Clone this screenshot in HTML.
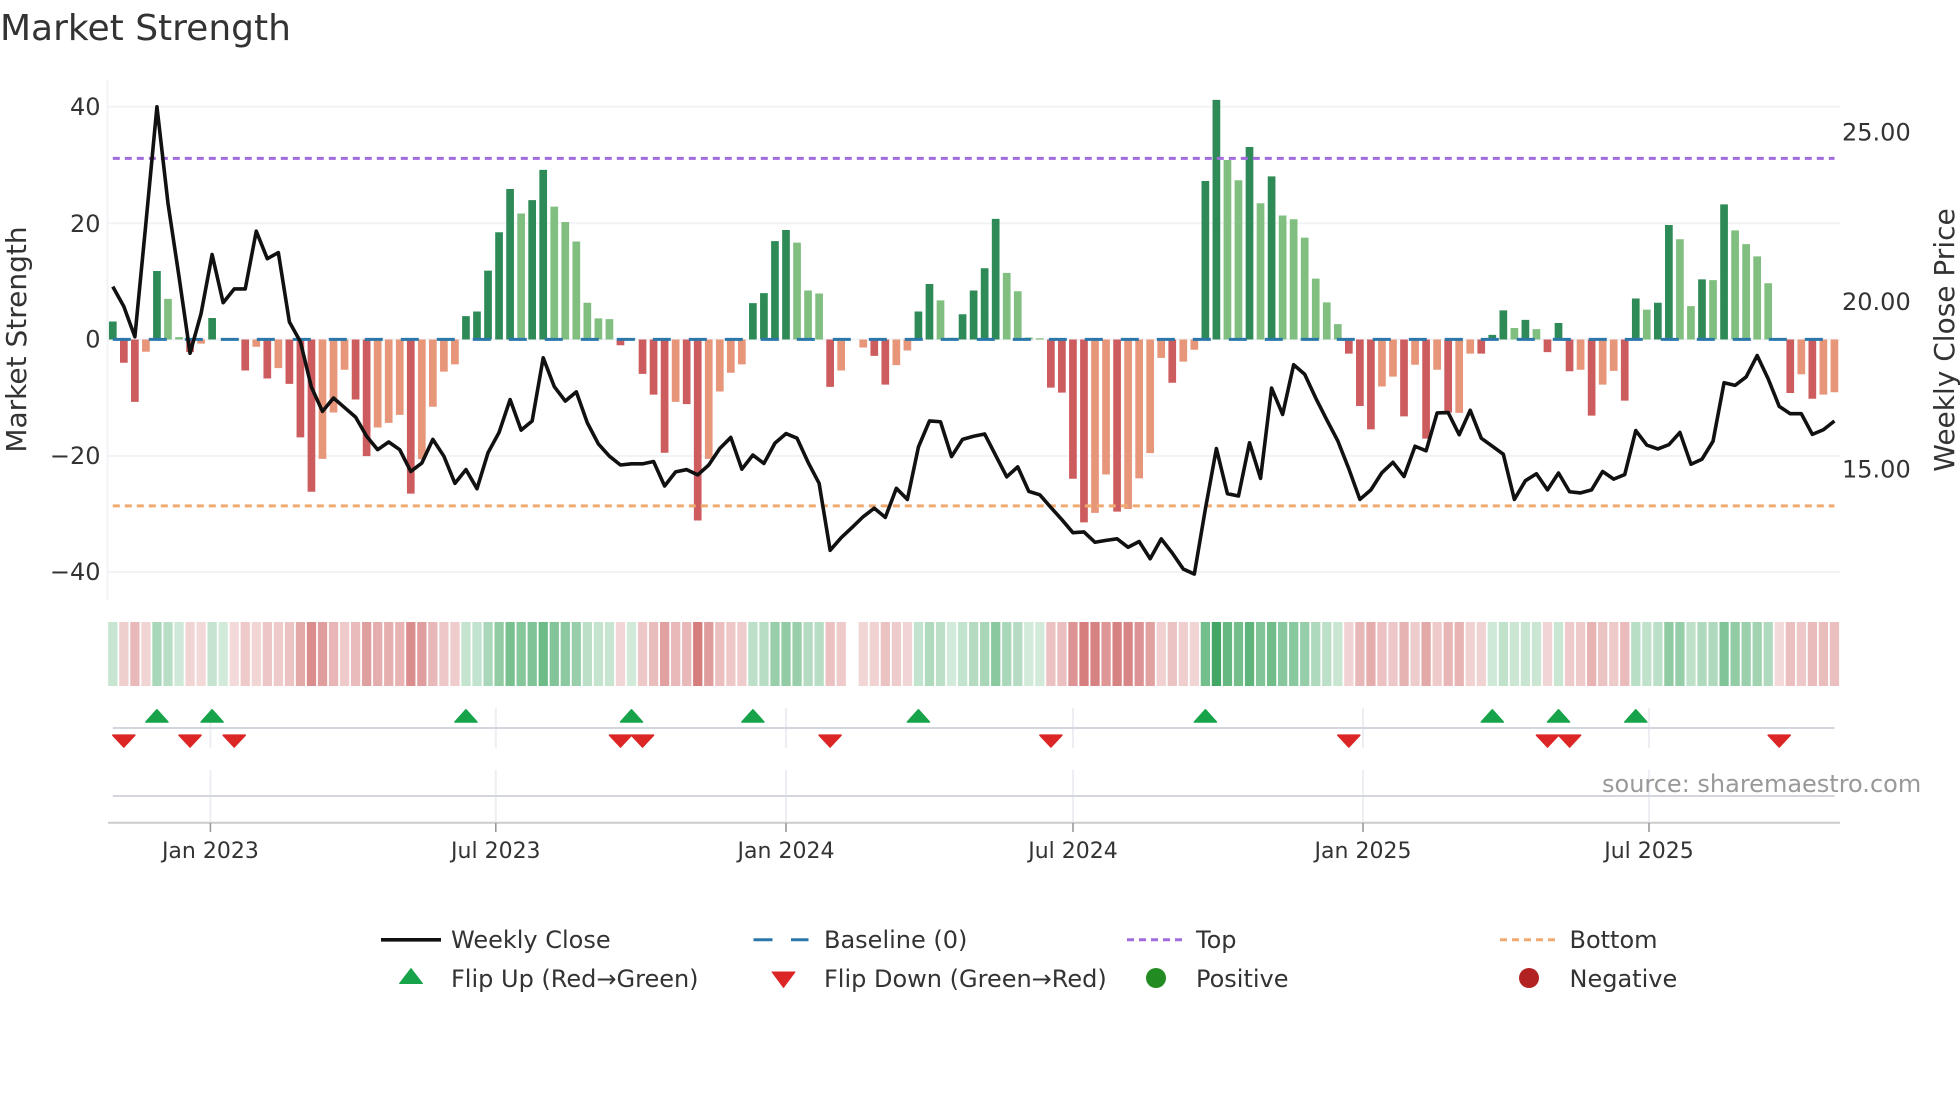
<!DOCTYPE html>
<html lang="en">
<head>
<meta charset="utf-8">
<title>Market Strength</title>
<style>
html,body{margin:0;padding:0;background:#fff}
svg{display:block}
text{font-family:"DejaVu Sans","Liberation Sans",sans-serif;fill:#333}
.t{font-size:24px}
.x{font-size:22px;text-anchor:middle}
.l{font-size:24px}
.a{font-size:28px;text-anchor:middle}
.h rect{width:.84px;height:1px}
.h .g{fill:rgb(30,150,70)}
.h .r{fill:rgb(190,50,50);opacity:.92}
.v{vector-effect:non-scaling-stroke;fill:none}
</style>
</head>
<body>
<svg xmlns="http://www.w3.org/2000/svg" width="1960" height="1102" viewBox="0 0 1960 1102">
<defs>
<path id="u" d="M-11 13 L0 .8 L11 13Z" fill="#16a34a" stroke="#16a34a" stroke-width="1.6" stroke-linejoin="round"/>
<path id="d" d="M-11 .8 L0 12.6 L11 .8Z" fill="#dc2626" stroke="#dc2626" stroke-width="1.6" stroke-linejoin="round"/>
</defs>

<text x="0" y="40" style="font-size:36px">Market Strength</text>

<!-- main panel grid -->
<path d="M108 106.7H1840M108 223.3H1840M108 339.4H1840M108 455.9H1840M108 572H1840" stroke="#f1f3f6" stroke-width="2" fill="none"/>
<path d="M107.5 80V600" stroke="#f1f3f7" stroke-width="2" fill="none"/>

<!-- bars -->
<g transform="translate(112.8 0) scale(11.036 .3827)" fill="none">
<path class="v" stroke="#2e8b57" stroke-width="7.7" d="M0 887V840M4 887V708M9 887V831M32 887V826M33 887V814M34 887V707M35 887V607M36 887V494M38 887V523M39 887V444M47 887V884M58 887V792M59 887V766M60 887V630M61 887V601M73 887V814M74 887V742M76 887V883M77 887V821M78 887V759M79 887V701M80 887V572M99 887V473M100 887V261M103 887V384M105 887V461M125 887V875M126 887V811M128 887V836M131 887V844M138 887V780M140 887V791M141 887V588M144 887V730M146 887V534"/>
<path class="v" stroke="#80bf80" stroke-width="7.7" d="M5 887V781M6 887V881M37 887V558M40 887V540M41 887V580M42 887V631M43 887V791M44 887V832M45 887V834M62 887V634M63 887V759M64 887V767M75 887V785M81 887V713M82 887V761M83 887V882M84 887V884M101 887V418M102 887V471M104 887V531M106 887V563M107 887V573M108 887V621M109 887V728M110 887V790M111 887V847M127 887V857M129 887V860M139 887V809M142 887V625M143 887V800M145 887V732M147 887V602M148 887V638M149 887V670M150 887V740"/>
<path class="v" stroke="#cd5c5e" stroke-width="7.7" d="M1 887V948M2 887V1050M7 887V920M12 887V968M14 887V989M16 887V1003M17 887V1143M18 887V1285M22 887V1044M23 887V1192M27 887V1290M46 887V902M48 887V977M49 887V1031M50 887V1183M52 887V1056M53 887V1360M65 887V1011M69 887V930M70 887V1005M85 887V1013M86 887V1026M87 887V1251M88 887V1365M91 887V1337M96 887V1000M112 887V924M113 887V1061M114 887V1122M117 887V1088M119 887V1146M121 887V1078M124 887V924M130 887V920M132 887V970M134 887V1086M137 887V1047M152 887V1027M154 887V1042"/>
<path class="v" stroke="#e8967a" stroke-width="7.7" d="M3 887V919M8 887V898M13 887V906M15 887V962M19 887V1199M20 887V1078M21 887V966M24 887V1117M25 887V1105M26 887V1084M28 887V1200M29 887V1063M30 887V971M31 887V952M51 887V1050M54 887V1199M55 887V1023M56 887V974M57 887V952M66 887V968M68 887V908M71 887V954M72 887V916M89 887V1340M90 887V1240M92 887V1330M93 887V1250M94 887V1184M95 887V935M97 887V945M98 887V914M115 887V1010M116 887V984M118 887V953M120 887V966M122 887V1079M123 887V924M133 887V966M135 887V1005M136 887V969M153 887V978M155 887V1031M156 887V1025"/>
</g>

<!-- reference lines -->
<path d="M112.8 339.4H1834.5" stroke="#2b77a9" stroke-width="3" stroke-dasharray="18 18" fill="none"/>
<path d="M112.8 158.4H1834.5" stroke="#a06cdc" stroke-width="3" stroke-dasharray="7 5" fill="none"/>
<path d="M112.8 505.9H1834.5" stroke="#f0aa70" stroke-width="3" stroke-dasharray="7 5" fill="none"/>

<!-- price line -->
<g transform="translate(112.8 0) scale(11.036 .3827)">
<path class="v" stroke="#111" stroke-width="3.6" stroke-linejoin="round" d="M0 749L1 801 2 880 3 583 4 279 5 531 6 723 7 923 8 819 9 665 10 791 11 755 12 755 13 604 14 676 15 660 16 841 17 893 18 1012 19 1075 20 1040 21 1065 22 1090 23 1140 24 1175 25 1155 26 1175 27 1232 28 1210 29 1148 30 1192 31 1263 32 1227 33 1277 34 1183 35 1130 36 1044 37 1124 38 1100 39 935 40 1010 41 1048 42 1024 43 1105 44 1160 45 1192 46 1215 47 1212 48 1212 49 1206 50 1270 51 1233 52 1227 53 1241 54 1215 55 1172 56 1143 57 1226 58 1189 59 1211 60 1158 61 1133 62 1145 63 1208 64 1263 65 1438 66 1405 67 1378 68 1350 69 1328 70 1352 71 1276 72 1305 73 1168 74 1100 75 1102 76 1193 77 1148 78 1140 79 1134 80 1190 81 1246 82 1220 83 1284 84 1293 85 1326 86 1358 87 1392 88 1390 89 1417 90 1412 91 1408 92 1430 93 1415 94 1460 95 1408 96 1445 97 1487 98 1500 99 1330 100 1172 101 1290 102 1296 103 1157 104 1250 105 1014 106 1083 107 953 108 978 109 1040 110 1097 111 1152 112 1225 113 1305 114 1280 115 1235 116 1208 117 1245 118 1166 119 1178 120 1079 121 1078 122 1136 123 1072 124 1145 125 1166 126 1187 127 1305 128 1256 129 1238 130 1280 131 1236 132 1285 133 1288 134 1280 135 1232 136 1252 137 1240 138 1125 139 1163 140 1173 141 1162 142 1130 143 1213 144 1200 145 1153 146 1000 147 1007 148 985 149 929 150 990 151 1062 152 1081 153 1081 154 1135 155 1123 156 1100"/>
</g>

<!-- y labels -->
<g text-anchor="end">
<text class="t" x="100.5" y="115">40</text>
<text class="t" x="100.5" y="232">20</text>
<text class="t" x="100.5" y="347.5">0</text>
<text class="t" x="100.5" y="464">−20</text>
<text class="t" x="100.5" y="580">−40</text>
</g>
<text class="t" x="1842" y="140.5">25.00</text>
<text class="t" x="1842" y="310">20.00</text>
<text class="t" x="1842" y="477.5">15.00</text>
<text class="a" transform="translate(26 339.5) rotate(-90)">Market Strength</text>
<text class="a" transform="translate(1954 340) rotate(-90)">Weekly Close Price</text>

<!-- heat strip -->
<g class="h" transform="translate(108.2 622) scale(11.036 64)">
<rect x="0" class="g" fill-opacity=".25"/><rect x="1" class="r" fill-opacity=".26"/><rect x="2" class="r" fill-opacity=".37"/><rect x="3" class="r" fill-opacity=".23"/><rect x="4" class="g" fill-opacity=".38"/><rect x="5" class="g" fill-opacity=".31"/><rect x="6" class="g" fill-opacity=".21"/><rect x="7" class="r" fill-opacity=".23"/><rect x="8" class="r" fill-opacity=".21"/><rect x="9" class="g" fill-opacity=".26"/>
<rect x="10" class="g" fill-opacity=".2"/><rect x="11" class="r" fill-opacity=".2"/><rect x="12" class="r" fill-opacity=".28"/><rect x="13" class="r" fill-opacity=".22"/><rect x="14" class="r" fill-opacity=".3"/><rect x="15" class="r" fill-opacity=".28"/><rect x="16" class="r" fill-opacity=".32"/><rect x="17" class="r" fill-opacity=".46"/><rect x="18" class="r" fill-opacity=".61"/><rect x="19" class="r" fill-opacity=".52"/>
<rect x="20" class="r" fill-opacity=".39"/><rect x="21" class="r" fill-opacity=".28"/><rect x="22" class="r" fill-opacity=".36"/><rect x="23" class="r" fill-opacity=".51"/><rect x="24" class="r" fill-opacity=".43"/><rect x="25" class="r" fill-opacity=".42"/><rect x="26" class="r" fill-opacity=".4"/><rect x="27" class="r" fill-opacity=".61"/><rect x="28" class="r" fill-opacity=".52"/><rect x="29" class="r" fill-opacity=".38"/>
<rect x="30" class="r" fill-opacity=".29"/><rect x="31" class="r" fill-opacity=".27"/><rect x="32" class="g" fill-opacity=".26"/><rect x="33" class="g" fill-opacity=".27"/><rect x="34" class="g" fill-opacity=".38"/><rect x="35" class="g" fill-opacity=".49"/><rect x="36" class="g" fill-opacity=".6"/><rect x="37" class="g" fill-opacity=".54"/><rect x="38" class="g" fill-opacity=".57"/><rect x="39" class="g" fill-opacity=".65"/>
<rect x="40" class="g" fill-opacity=".55"/><rect x="41" class="g" fill-opacity=".51"/><rect x="42" class="g" fill-opacity=".46"/><rect x="43" class="g" fill-opacity=".3"/><rect x="44" class="g" fill-opacity=".26"/><rect x="45" class="g" fill-opacity=".25"/><rect x="46" class="r" fill-opacity=".22"/><rect x="47" class="g" fill-opacity=".2"/><rect x="48" class="r" fill-opacity=".29"/><rect x="49" class="r" fill-opacity=".35"/>
<rect x="50" class="r" fill-opacity=".5"/><rect x="51" class="r" fill-opacity=".37"/><rect x="52" class="r" fill-opacity=".37"/><rect x="53" class="r" fill-opacity=".68"/><rect x="54" class="r" fill-opacity=".52"/><rect x="55" class="r" fill-opacity=".34"/><rect x="56" class="r" fill-opacity=".29"/><rect x="57" class="r" fill-opacity=".27"/><rect x="58" class="g" fill-opacity=".3"/><rect x="59" class="g" fill-opacity=".32"/>
<rect x="60" class="g" fill-opacity=".46"/><rect x="61" class="g" fill-opacity=".49"/><rect x="62" class="g" fill-opacity=".46"/><rect x="63" class="g" fill-opacity=".33"/><rect x="64" class="g" fill-opacity=".32"/><rect x="65" class="r" fill-opacity=".33"/><rect x="66" class="r" fill-opacity=".28"/><rect x="68" class="r" fill-opacity=".22"/><rect x="69" class="r" fill-opacity=".24"/>
<rect x="70" class="r" fill-opacity=".32"/><rect x="71" class="r" fill-opacity=".27"/><rect x="72" class="r" fill-opacity=".23"/><rect x="73" class="g" fill-opacity=".27"/><rect x="74" class="g" fill-opacity=".35"/><rect x="75" class="g" fill-opacity=".3"/><rect x="76" class="g" fill-opacity=".2"/><rect x="77" class="g" fill-opacity=".27"/><rect x="78" class="g" fill-opacity=".33"/><rect x="79" class="g" fill-opacity=".39"/>
<rect x="80" class="g" fill-opacity=".52"/><rect x="81" class="g" fill-opacity=".38"/><rect x="82" class="g" fill-opacity=".33"/><rect x="83" class="g" fill-opacity=".2"/><rect x="84" class="g" fill-opacity=".2"/><rect x="85" class="r" fill-opacity=".33"/><rect x="86" class="r" fill-opacity=".34"/><rect x="87" class="r" fill-opacity=".57"/><rect x="88" class="r" fill-opacity=".69"/><rect x="89" class="r" fill-opacity=".66"/>
<rect x="90" class="r" fill-opacity=".56"/><rect x="91" class="r" fill-opacity=".66"/><rect x="92" class="r" fill-opacity=".65"/><rect x="93" class="r" fill-opacity=".57"/><rect x="94" class="r" fill-opacity=".5"/><rect x="95" class="r" fill-opacity=".25"/><rect x="96" class="r" fill-opacity=".32"/><rect x="97" class="r" fill-opacity=".26"/><rect x="98" class="r" fill-opacity=".23"/><rect x="99" class="g" fill-opacity=".62"/>
<rect x="100" class="g" fill-opacity=".84"/><rect x="101" class="g" fill-opacity=".68"/><rect x="102" class="g" fill-opacity=".62"/><rect x="103" class="g" fill-opacity=".71"/><rect x="104" class="g" fill-opacity=".56"/><rect x="105" class="g" fill-opacity=".63"/><rect x="106" class="g" fill-opacity=".53"/><rect x="107" class="g" fill-opacity=".52"/><rect x="108" class="g" fill-opacity=".47"/><rect x="109" class="g" fill-opacity=".36"/>
<rect x="110" class="g" fill-opacity=".3"/><rect x="111" class="g" fill-opacity=".24"/><rect x="112" class="r" fill-opacity=".24"/><rect x="113" class="r" fill-opacity=".38"/><rect x="114" class="r" fill-opacity=".44"/><rect x="115" class="r" fill-opacity=".33"/><rect x="116" class="r" fill-opacity=".3"/><rect x="117" class="r" fill-opacity=".41"/><rect x="118" class="r" fill-opacity=".27"/><rect x="119" class="r" fill-opacity=".46"/>
<rect x="120" class="r" fill-opacity=".28"/><rect x="121" class="r" fill-opacity=".39"/><rect x="122" class="r" fill-opacity=".4"/><rect x="123" class="r" fill-opacity=".24"/><rect x="124" class="r" fill-opacity=".24"/><rect x="125" class="g" fill-opacity=".21"/><rect x="126" class="g" fill-opacity=".28"/><rect x="127" class="g" fill-opacity=".23"/><rect x="128" class="g" fill-opacity=".25"/><rect x="129" class="g" fill-opacity=".23"/>
<rect x="130" class="r" fill-opacity=".23"/><rect x="131" class="g" fill-opacity=".24"/><rect x="132" class="r" fill-opacity=".28"/><rect x="133" class="r" fill-opacity=".28"/><rect x="134" class="r" fill-opacity=".4"/><rect x="135" class="r" fill-opacity=".32"/><rect x="136" class="r" fill-opacity=".28"/><rect x="137" class="r" fill-opacity=".36"/><rect x="138" class="g" fill-opacity=".31"/><rect x="139" class="g" fill-opacity=".28"/>
<rect x="140" class="g" fill-opacity=".3"/><rect x="141" class="g" fill-opacity=".5"/><rect x="142" class="g" fill-opacity=".47"/><rect x="143" class="g" fill-opacity=".29"/><rect x="144" class="g" fill-opacity=".36"/><rect x="145" class="g" fill-opacity=".36"/><rect x="146" class="g" fill-opacity=".56"/><rect x="147" class="g" fill-opacity=".49"/><rect x="148" class="g" fill-opacity=".45"/><rect x="149" class="g" fill-opacity=".42"/>
<rect x="150" class="g" fill-opacity=".35"/><rect x="151" class="r" fill-opacity=".2"/><rect x="152" class="r" fill-opacity=".34"/><rect x="153" class="r" fill-opacity=".29"/><rect x="154" class="r" fill-opacity=".36"/><rect x="155" class="r" fill-opacity=".35"/><rect x="156" class="r" fill-opacity=".34"/>
</g>

<!-- lower panels -->
<path d="M210.4 708V748M210.4 770V823M495.8 708V748M495.8 770V823M786 708V748M786 770V823M1073 708V748M1073 770V823M1363 708V748M1363 770V823M1649 708V748M1649 770V823" stroke="#eceef3" stroke-width="2" fill="none"/>
<path d="M112.8 728H1834.5M112.8 796H1834.5" stroke="#d3d6dc" stroke-width="2" fill="none"/>
<path d="M108 822.7H1840" stroke="#cccccc" stroke-width="2" fill="none"/>
<path d="M210.4 823V832M495.8 823V832M786 823V832M1073 823V832M1363 823V832M1649 823V832" stroke="#999" stroke-width="1.6" fill="none"/>

<g transform="translate(0 709)">
<use href="#u" x="156.9"/><use href="#u" x="212.1"/><use href="#u" x="465.95"/><use href="#u" x="631.5"/><use href="#u" x="752.9"/><use href="#u" x="918.4"/><use href="#u" x="1205.4"/><use href="#u" x="1492.3"/><use href="#u" x="1558.5"/><use href="#u" x="1635.8"/>
</g>
<g transform="translate(0 734.4)">
<use href="#d" x="123.8"/><use href="#d" x="190.05"/><use href="#d" x="234.2"/><use href="#d" x="620.5"/><use href="#d" x="642.5"/><use href="#d" x="830.1"/><use href="#d" x="1050.9"/><use href="#d" x="1348.8"/><use href="#d" x="1547.5"/><use href="#d" x="1569.6"/><use href="#d" x="1779.2"/>
</g>

<text x="1602" y="792" style="font-size:24px;fill:#999">source: sharemaestro.com</text>

<text class="x" x="210.4" y="858">Jan 2023</text>
<text class="x" x="495.8" y="858">Jul 2023</text>
<text class="x" x="786" y="858">Jan 2024</text>
<text class="x" x="1073" y="858">Jul 2024</text>
<text class="x" x="1363" y="858">Jan 2025</text>
<text class="x" x="1649" y="858">Jul 2025</text>

<!-- legend -->
<path d="M381 939.8H441" stroke="#111" stroke-width="3.6" fill="none"/>
<path d="M753.5 939.8H772.5M791 939.8H808.5" stroke="#2b77a9" stroke-width="3" fill="none"/>
<path d="M1127 939.8H1182" stroke="#a06cdc" stroke-width="3" stroke-dasharray="7 5" fill="none"/>
<path d="M1500 939.8H1555" stroke="#f0aa70" stroke-width="3" stroke-dasharray="7 5" fill="none"/>
<path d="M399.5 983.5L411 968.5 422.5 983.5Z" fill="#16a34a" stroke="#16a34a" stroke-width="1" stroke-linejoin="round"/>
<path d="M772 972L783.5 987.5 795 972Z" fill="#dc2626" stroke="#dc2626" stroke-width="1" stroke-linejoin="round"/>
<circle cx="1156" cy="978" r="10" fill="#228b22"/>
<circle cx="1529" cy="978" r="10" fill="#b22222"/>
<text class="l" x="451" y="948">Weekly Close</text>
<text class="l" x="824" y="948">Baseline (0)</text>
<text class="l" x="1196" y="948">Top</text>
<text class="l" x="1569.5" y="948">Bottom</text>
<text class="l" x="451" y="987">Flip Up (Red→Green)</text>
<text class="l" x="824" y="987">Flip Down (Green→Red)</text>
<text class="l" x="1196" y="987">Positive</text>
<text class="l" x="1569.5" y="987">Negative</text>
</svg>
</body>
</html>
